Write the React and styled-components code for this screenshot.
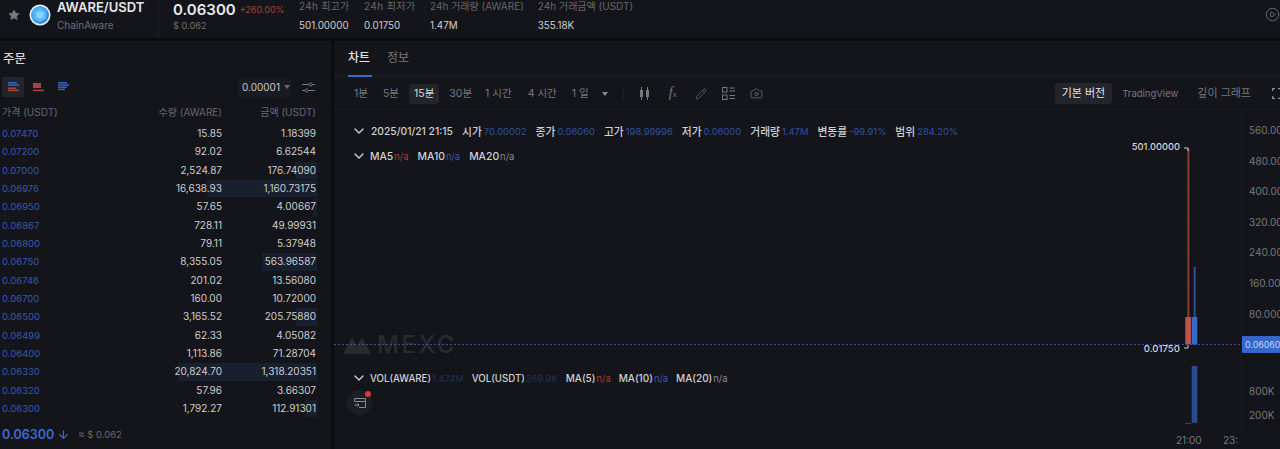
import React from "react";
import styled, { createGlobalStyle } from "styled-components";
import { Star, ChevronDown, Pencil, Camera, CirclePlay, ArrowDown } from "lucide-react";

const Global = createGlobalStyle`
  html, body { margin: 0; padding: 0; background: #0b0c0e; }
  body { font-family: Inter, "Noto Sans CJK KR", sans-serif; overflow: hidden; }
  * { box-sizing: border-box; }
`;

const Page = styled.div`
  width: 1280px; height: 449px; display: flex; flex-direction: column; gap: 3px;
  background: #0b0c0e; overflow: hidden; color: #d8d8da;
`;
const Header = styled.header`
  height: 38px; background: #14151a; display: flex; align-items: flex-start; position: relative; flex: none;
`;
const StarBox = styled.div`
  width: 29px; height: 30px; padding-left: 8px; display: flex; align-items: center; color: #77787c;
`;
const Logo = styled.svg`
  width: 22px; height: 22px; margin-top: 4px; flex: none;
`;
const Pair = styled.div`
  margin-left: 6px; height: 38px; border-right: 1px solid #1d1e23; width: 102px;
`;
const PairName = styled.div`
  font-size: 13px; font-weight: 600; color: #e6e6e8; line-height: 14px; margin-top: 0;
`;
const PairSub = styled.div`
  font-size: 10px; color: #6d6e73; line-height: 14px; margin-top: 4px;
`;
const PriceBlock = styled.div`
  margin-left: 14px; width: 126px; flex: none;
`;
const PriceLine = styled.div`
  display: flex; align-items: center; gap: 4px; height: 18px;
`;
const BigPrice = styled.span`
  font-size: 15px; font-weight: 600; color: #e8e8ea;
`;
const Change = styled.span`
  font-size: 9px; color: #a5403b;
`;
const SubPrice = styled.div`
  font-size: 9.2px; color: #6d6e73; margin-top: 2px;
`;
const Stats = styled.div`
  display: flex; gap: 14px;
`;
const Stat = styled.div`
  display: flex; flex-direction: column; gap: 8px; min-width: ${(p) => p.$w || 0}px;
`;
const StatLabel = styled.div`
  font-size: 10px; line-height: 12px; color: #66676c; white-space: nowrap; letter-spacing: ${(p) => p.$ls || 0}px;
`;
const StatValue = styled.div`
  font-size: 9.8px; line-height: 12px; color: #cfd0d2; white-space: nowrap;
`;
const PlayIcon = styled.div`
  position: absolute; right: 0; top: 7px; color: #6d6e72; display: flex;
`;

const Body = styled.div`
  flex: 1; display: flex; gap: 3px; min-height: 0;
`;
const OrderPanel = styled.aside`
  width: 331px; flex: none; background: #14151a; padding: 0 15px 0 2px; display: flex; flex-direction: column;
`;
const OrderTitle = styled.div`
  font-size: 12.5px; font-weight: 500; color: #d5d5d7; height: 35px; line-height: 35px; padding-left: 1px;
`;
const BookTools = styled.div`
  display: flex; align-items: center; height: 20px; margin-top: 1px;
`;
const BookBtn = styled.div`
  width: 22px; height: 20px; margin-right: ${(p) => p.$mr || 0}px; display: flex; align-items: center; justify-content: center;
  border-radius: 2px; background: ${(p) => (p.$active ? "#24252b" : "transparent")};
`;
const Precision = styled.div`
  margin-left: auto; width: 53px; height: 19px; background: #1a1b20; border-radius: 2px; display: flex; align-items: center;
  padding-left: 4px; gap: 4px; font-size: 10px; color: #c8c8ca;
`;
const Caret = styled.span`
  width: 0; height: 0; margin-left: ${(p) => p.$ml || 0}px; border-left: 3px solid transparent; border-right: 3px solid transparent; border-top: 4px solid ${(p) => p.$c || "#6a6b70"};
`;
const TuneBtn = styled.svg`
  width: 13px; height: 13px; margin: 0 1px 0 11px; flex: none;
`;
const BookHead = styled.div`
  display: grid; grid-template-columns: 1fr 90px 94px; height: 16px; margin-top: 7px; font-size: 10px; color: #66676c; line-height: 16px;
`;
const Right = styled.span`
  text-align: right; white-space: nowrap;
`;
const Rows = styled.div`
  display: flex; flex-direction: column; margin-top: 4px;
`;
const Row = styled.div`
  position: relative; display: grid; grid-template-columns: 1fr 90px 94px; height: 18.33px; line-height: 18.33px; font-size: 10px;
`;
const Depth = styled.div`
  position: absolute; right: -1px; top: 1px; bottom: 0; background: #181f2e;
`;
const RowPrice = styled.span`
  color: #3459ac; position: relative; font-size: 9.5px; line-height: 19.3px;
`;
const RowNum = styled.span`
  color: #cdced0; text-align: right; position: relative;
`;
const BookFoot = styled.div`
  display: flex; align-items: center; margin-top: 8px; gap: 3px; height: 18px;
`;
const FootPrice = styled.span`
  font-size: 12.5px; font-weight: 600; color: #3b6bd0;
`;
const FootSub = styled.span`
  font-size: 9.5px; color: #66676c; margin-left: 5px;
`;

const ChartPanel = styled.main`
  flex: 1; min-width: 0; background: #14151a; display: flex; flex-direction: column;
`;
const Tabs = styled.div`
  height: 36px; display: flex; gap: 15px; padding-left: 14px; border-bottom: 1px solid #1c1d22; flex: none;
`;
const Tab = styled.div`
  height: 36px; font-size: 12px; line-height: 34px; color: ${(p) => (p.$on ? "#e2e2e4" : "#77787c")}; font-weight: ${(p) => (p.$on ? 500 : 400)};
  border-bottom: 2px solid ${(p) => (p.$on ? "#3a6ad0" : "transparent")}; width: 24px; white-space: nowrap;
`;
const Toolbar = styled.div`
  height: 33px; display: flex; align-items: center; padding: 1px 0 0 19px; border-bottom: 1px solid #1a1b20; flex: none; font-size: 10.5px; color: #77787c; white-space: nowrap;
`;
const Interval = styled.div`
  height: 20px; line-height: 20px; padding: 0 5px; border-radius: 3px; margin-left: ${(p) => p.$ml}px;
  background: ${(p) => (p.$on ? "#24252b" : "transparent")}; color: ${(p) => (p.$on ? "#d8d8da" : "#77787c")};
  display: flex; align-items: center;
`;
const Divider = styled.div`
  width: 1px; height: 14px; background: #202126; margin: 0 14px 0 15px;
`;
const ToolIcon = styled.div`
  width: 14px; height: 14px; display: flex; align-items: center; justify-content: center; margin-right: 14px; color: #77787c;
`;
const FxGlyph = styled.span`
  font-family: "Liberation Serif", serif; font-style: italic; font-size: 14px; color: #77787c; line-height: 14px;
`;
const FxSmall = styled.span`
  font-family: Inter, sans-serif; font-style: normal; font-size: 7px;
`;
const ViewGroup = styled.div`
  margin-left: auto; display: flex; align-items: center; height: 21px; font-size: 11px;
`;
const ViewBtn = styled.div`
  height: 21px; line-height: 21px; border-radius: 3px; padding: 0 7px; margin-right: ${(p) => p.$mr}px; font-size: ${(p) => p.$fs || 11}px;
  background: ${(p) => (p.$on ? "#24252b" : "transparent")}; color: ${(p) => (p.$on ? "#e2e2e4" : "#77787c")};
`;
const FsIcon = styled.svg`
  width: 8px; height: 11px; flex: none;
`;

const ChartBody = styled.div`
  flex: 1; display: flex; min-height: 0;
`;
const Plot = styled.div`
  flex: 1; position: relative; min-width: 0; display: flex; flex-direction: column;
`;
const PlotSvg = styled.svg`
  position: absolute; left: 0; top: 0; width: 907px; height: 322px;
`;
const MainPane = styled.div`
  height: 255px; position: relative; padding: 14px 0 0 20px; flex: none;
`;
const VolPane = styled.div`
  flex: 1; position: relative; padding: 6px 0 0 20px;
`;
const Legend = styled.div`
  display: flex; align-items: center; height: 14px; margin-bottom: 11px; white-space: nowrap;
`;
const LegendChev = styled.span`
  position: absolute; left: 17px; display: flex; color: #cfcfd1;
`;
const LegendText = styled.div`
  display: flex; margin-left: ${(p) => p.$ml}px; gap: ${(p) => p.$gap}px;
`;
const Item = styled.span`
  color: #cfd0d2; display: flex; align-items: center; gap: ${(p) => (p.$ko ? 2 : 1)}px; font-weight: 500;
  font-size: ${(p) => (p.$ko ? 10.8 : p.$fs || 10.4)}px;
`;
const Val = styled.span`
  color: ${(p) => p.$c || "#2f51a0"}; font-size: 9.4px; font-weight: 400;
`;
const Watermark = styled.div`
  position: absolute; left: 9px; top: 224px; display: flex; align-items: center; gap: 6px; color: #2a2b2f; font-size: 24px; font-weight: 500; letter-spacing: 2.5px; line-height: 22px;
`;
const Widget = styled.div`
  position: absolute; left: 13px; top: 25px; width: 25px; height: 25px; border-radius: 50%; background: #1d1e23; display: flex; align-items: center; justify-content: center;
`;
const Dot = styled.span`
  position: absolute; right: 1px; top: 1px; width: 6px; height: 6px; border-radius: 50%; background: #d83a3a;
`;
const Axis = styled.div`
  width: 39px; flex: none; border-left: 1px solid #1a1b20; position: relative; font-size: 10px; color: #77787c; overflow: hidden; white-space: nowrap;
`;
const PriceTicks = styled.div`
  padding: 5px 0 0 7px; height: 255px;
`;
const Tick = styled.div`
  height: 30.6px; line-height: 30.6px;
`;
const VolTicks = styled.div`
  padding: 14px 0 0 7px;
`;
const VolTick = styled.div`
  height: 24px; line-height: 24px;
`;
const PriceTag = styled.div`
  position: absolute; left: 0; top: 226px; height: 17px; width: 38px; background: #3567c8; color: #c4d3f2; line-height: 17px; padding-left: 3px; border-radius: 1px; font-size: 8.8px;
`;
const TimeAxis = styled.div`
  height: 17px; flex: none; position: relative; font-size: 10px; color: #77787c; line-height: 16px;
`;
const TimeLabel = styled.span`
  position: absolute; left: ${(p) => p.$x}px;
`;

const rows = [
  ["0.07470", "15.85", "1.18399", 0],
  ["0.07200", "92.02", "6.62544", 0],
  ["0.07000", "2,524.87", "176.74090", 22],
  ["0.06976", "16,638.93", "1,160.73175", 110],
  ["0.06950", "57.65", "4.00667", 4],
  ["0.06867", "728.11", "49.99931", 0],
  ["0.06800", "79.11", "5.37948", 0],
  ["0.06750", "8,355.05", "563.96587", 55],
  ["0.06746", "201.02", "13.56080", 0],
  ["0.06700", "160.00", "10.72000", 0],
  ["0.06500", "3,165.52", "205.75880", 21],
  ["0.06499", "62.33", "4.05082", 0],
  ["0.06400", "1,113.86", "71.28704", 0],
  ["0.06330", "20,824.70", "1,318.20351", 139],
  ["0.06320", "57.96", "3.66307", 0],
  ["0.06300", "1,792.27", "112.91301", 12],
];

const BookIcon = ({ top, bottom }) => (
  <svg width="11" height="10" viewBox="0 0 11 10">
    {top && <><rect x="0" y="0" width="9" height="1.5" fill={top} /><rect x="0" y="2.2" width="11" height="1.5" fill={top} /></>}
    {bottom && <><rect x="0" y={top ? 5.5 : 1} width="8" height={top ? 1.6 : 5} fill={bottom} /><rect x="0" y="7.6" width="11" height="1.6" fill={bottom} /></>}
    {!bottom && <><rect x="0" y="4.4" width="9" height="1.5" fill={top} /><rect x="0" y="6.6" width="7" height="1.5" fill={top} /></>}
  </svg>
);

const Chev = () => (
  <LegendChev><ChevronDown size={16} strokeWidth={2} /></LegendChev>
);

export default function App() {
  return (
    <Page>
      <Global />
      <Header>
        <StarBox><Star size={12} fill="#77787c" strokeWidth={1} /></StarBox>
        <Logo viewBox="0 0 22 22">
          <defs>
            <linearGradient id="lg" x1="0" y1="0" x2="1" y2="1">
              <stop offset="0" stopColor="#58b8f2" />
              <stop offset="1" stopColor="#2a7fe0" />
            </linearGradient>
          </defs>
          <circle cx="11" cy="11" r="10.5" fill="#e8f3fb" />
          <circle cx="11" cy="11" r="9" fill="url(#lg)" />
          <path d="M11 4 17 7.5V14.5L11 18 5 14.5V7.5Z" fill="#5cbcf4" />
          <path d="M11 7 14.5 9V13L11 15 7.5 13V9Z" fill="#86d4fa" />
        </Logo>
        <Pair>
          <PairName>AWARE/USDT</PairName>
          <PairSub>ChainAware</PairSub>
        </Pair>
        <PriceBlock>
          <PriceLine><BigPrice>0.06300</BigPrice><Change>+260.00%</Change></PriceLine>
          <SubPrice>$ 0.062</SubPrice>
        </PriceBlock>
        <Stats>
          <Stat $w={51}><StatLabel $ls={0.25}>24h 최고가</StatLabel><StatValue>501.00000</StatValue></Stat>
          <Stat $w={52}><StatLabel $ls={0.4}>24h 최저가</StatLabel><StatValue>0.01750</StatValue></Stat>
          <Stat><StatLabel>24h 거래량 (AWARE)</StatLabel><StatValue>1.47M</StatValue></Stat>
          <Stat><StatLabel>24h 거래금액 (USDT)</StatLabel><StatValue>355.18K</StatValue></Stat>
        </Stats>
        <PlayIcon><CirclePlay size={15} strokeWidth={1.5} /></PlayIcon>
      </Header>
      <Body>
        <OrderPanel>
          <OrderTitle>주문</OrderTitle>
          <BookTools>
            <BookBtn $active $mr={3}><BookIcon top="#3a63b8" bottom="#a8433f" /></BookBtn>
            <BookBtn $mr={3}><BookIcon top={null} bottom="#a8433f" /></BookBtn>
            <BookBtn><BookIcon top="#3a63b8" /></BookBtn>
            <Precision>0.00001<Caret /></Precision>
            <TuneBtn viewBox="0 0 13 13" fill="none" stroke="#77787c" strokeWidth="1">
              <path d="M0 3.5H7M10 3.5H13M0 9.5H3M6 9.5H13" />
              <circle cx="8.5" cy="3.5" r="1.5" />
              <circle cx="4.5" cy="9.5" r="1.5" />
            </TuneBtn>
          </BookTools>
          <BookHead>
            <span>가격 (USDT)</span>
            <Right>수량 (AWARE)</Right>
            <Right>금액 (USDT)</Right>
          </BookHead>
          <Rows>
            {rows.map((r) => (
              <Row key={r[0]}>
                {r[3] > 0 && <Depth style={{ width: r[3] }} />}
                <RowPrice>{r[0]}</RowPrice>
                <RowNum>{r[1]}</RowNum>
                <RowNum>{r[2]}</RowNum>
              </Row>
            ))}
          </Rows>
          <BookFoot>
            <FootPrice>0.06300</FootPrice>
            <ArrowDown size={13} color="#3b6bd0" strokeWidth={2} />
            <FootSub>≈ $ 0.062</FootSub>
          </BookFoot>
        </OrderPanel>
        <ChartPanel>
          <Tabs>
            <Tab $on>차트</Tab>
            <Tab>정보</Tab>
          </Tabs>
          <Toolbar>
            <Interval $ml={-4}>1분</Interval>
            <Interval $ml={5}>5분</Interval>
            <Interval $on $ml={5}>15분</Interval>
            <Interval $ml={5}>30분</Interval>
            <Interval $ml={3}>1 시간</Interval>
            <Interval $ml={6}>4 시간</Interval>
            <Interval $ml={5}>1 일</Interval>
            <Caret $c="#8a8b8f" $ml={8} />
            <Divider />
            <ToolIcon>
              <svg width="13" height="13" viewBox="0 0 13 13" fill="#77787c" stroke="#77787c">
                <path d="M3.5 0V13M9.5 0V13" strokeWidth="1" />
                <rect x="2" y="3" width="3" height="7" stroke="none" />
                <rect x="8" y="3" width="3" height="7" stroke="none" />
              </svg>
            </ToolIcon>
            <ToolIcon><FxGlyph>f<FxSmall>x</FxSmall></FxGlyph></ToolIcon>
            <ToolIcon><Pencil size={12} strokeWidth={1.3} /></ToolIcon>
            <ToolIcon>
              <svg width="13" height="13" viewBox="0 0 13 13" fill="none" stroke="#77787c">
                <rect x="0.5" y="0.5" width="4.5" height="4.5" />
                <rect x="0.5" y="8" width="4.5" height="4.5" />
                <path d="M7.5 1H13M7.5 4H13M7.5 8.5H13M7.5 11.5H13" />
              </svg>
            </ToolIcon>
            <ToolIcon><Camera size={13} strokeWidth={1.3} /></ToolIcon>
            <ViewGroup>
              <ViewBtn $on $mr={3}>기본 버전</ViewBtn>
              <ViewBtn $mr={5} $fs={9.5}>TradingView</ViewBtn>
              <ViewBtn $mr={14}>깊이 그래프</ViewBtn>
              <FsIcon viewBox="0 0 8 11" fill="none" stroke="#8a8b8f" strokeWidth="1.2">
                <path d="M3 .6H.6V3M.6 8V10.4H3" />
                <path d="M6 .6H8M6 10.4H8" />
              </FsIcon>
            </ViewGroup>
          </Toolbar>
          <ChartBody>
            <Plot>
              <PlotSvg viewBox="334 110 907 322">
                {[130, 161, 191, 222, 252, 283, 314, 391, 415].map((y) => (
                  <line key={y} x1="334" x2="1241" y1={y + 0.5} y2={y + 0.5} stroke="#16171c" />
                ))}
                <line x1="1188.5" x2="1188.5" y1="110" y2="432" stroke="#16171c" />
                <rect x="1187.4" y="148" width="2" height="170" fill="#8c3a36" />
                <rect x="1185.3" y="317" width="5.7" height="27.5" fill="#c4504b" />
                <rect x="1193.7" y="267" width="2" height="50" fill="#2d4f96" />
                <rect x="1191.7" y="317" width="5.6" height="27.5" fill="#3468cc" />
                <rect x="1191.7" y="366" width="5.6" height="57" fill="#2a4a90" />
                <rect x="1185" y="423" width="6" height="1" fill="#6b3532" />
                <path d="M1184 148H1188M1188 148V151" stroke="#c9c9cb" fill="none" />
                <path d="M1184 348H1188V345" stroke="#c9c9cb" fill="none" />
                <text x="1180" y="150.3" textAnchor="end" fontSize="9.3" fontWeight="500" fill="#d5d5d7" fontFamily="Inter">501.00000</text>
                <text x="1180" y="352.3" textAnchor="end" fontSize="9.6" fontWeight="500" fill="#d5d5d7" fontFamily="Inter">0.01750</text>
              </PlotSvg>
              <MainPane>
                <Watermark>
                  <svg width="28" height="17" viewBox="0 0 28 17" fill="#2a2b2f"><path d="M0 17 9 0 14 9 19 0 28 17Z" /></svg>
                  MEXC
                </Watermark>
                <Legend>
                  <Chev />
                  <LegendText $ml={17} $gap={9}>
                    <Item $fs={10.3}>2025/01/21 21:15</Item>
                    <Item $ko>시가<Val>70.00002</Val></Item>
                    <Item $ko>종가<Val>0.06060</Val></Item>
                    <Item $ko>고가<Val>198.99996</Val></Item>
                    <Item $ko>저가<Val>0.06000</Val></Item>
                    <Item $ko>거래량<Val>1.47M</Val></Item>
                    <Item $ko>변동률<Val>-99.91%</Val></Item>
                    <Item $ko>범위<Val>284.20%</Val></Item>
                  </LegendText>
                </Legend>
                <Legend>
                  <Chev />
                  <LegendText $ml={16} $gap={9}>
                    <Item>MA5<Val $c="#a5403b">n/a</Val></Item>
                    <Item>MA10<Val $c="#3459ac">n/a</Val></Item>
                    <Item>MA20<Val $c="#8a8b8f">n/a</Val></Item>
                  </LegendText>
                </Legend>
              </MainPane>
              <VolPane>
                <Legend>
                  <Chev />
                  <LegendText $ml={16} $gap={8}>
                    <Item $fs={9.7}>VOL(AWARE)<Val $c="#1f3258">1.474M</Val></Item>
                    <Item $fs={9.7}>VOL(USDT)<Val $c="#1f3258">269.9K</Val></Item>
                    <Item $fs={10}>MA(5)<Val $c="#a5403b">n/a</Val></Item>
                    <Item $fs={10}>MA(10)<Val $c="#3459ac">n/a</Val></Item>
                    <Item $fs={10}>MA(20)<Val $c="#8a8b8f">n/a</Val></Item>
                  </LegendText>
                </Legend>
                <Widget>
                  <svg width="12" height="12" viewBox="0 0 12 12" fill="none" stroke="#8a8b8f">
                    <path d="M.5 4.5V1.5H11.5V10.5H5M.5 4.5H11.5M.5 8H5M3.5 6.5 5 8 3.5 9.5" />
                  </svg>
                  <Dot />
                </Widget>
              </VolPane>
              <PlotSvg viewBox="334 110 907 322">
                <line x1="334" x2="1241" y1="344.5" y2="344.5" stroke="#2f55a8" strokeDasharray="2 2" />
              </PlotSvg>
            </Plot>
            <Axis>
              <PriceTicks>
                {["560.00000", "480.00000", "400.00000", "320.00000", "240.00000", "160.00000", "80.00000"].map((t) => (
                  <Tick key={t}>{t}</Tick>
                ))}
              </PriceTicks>
              <PriceTag>0.06060</PriceTag>
              <VolTicks>
                <VolTick>800K</VolTick>
                <VolTick>200K</VolTick>
              </VolTicks>
            </Axis>
          </ChartBody>
          <TimeAxis>
            <TimeLabel $x={842}>21:00</TimeLabel>
            <TimeLabel $x={889}>23:</TimeLabel>
          </TimeAxis>
        </ChartPanel>
      </Body>
    </Page>
  );
}
